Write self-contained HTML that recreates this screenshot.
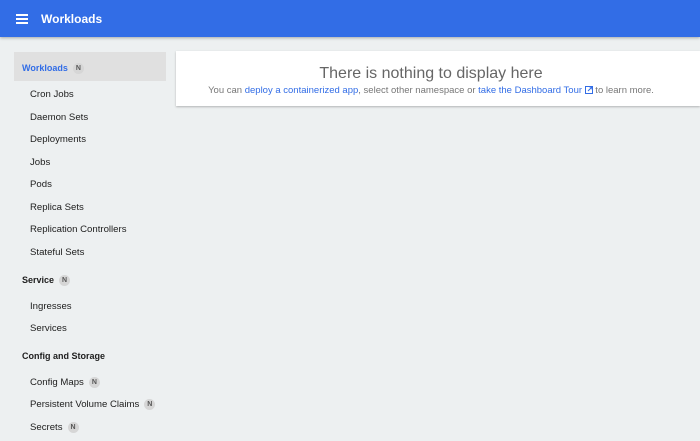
<!DOCTYPE html>
<html><head><style>
body{margin:0;width:700px;height:441px;overflow:hidden;background:#edf0f1;font-family:"Liberation Sans",sans-serif;position:relative}
.hdr{position:absolute;left:0;top:0;width:700px;height:37px;background:#326de6;box-shadow:0 1px 3px rgba(0,0,0,.3)}
.hdr .t{position:absolute;left:41px;top:12px;color:#fff;font-size:12px;font-weight:bold}
.bar{position:absolute;left:16px;width:12px;height:2px;background:#fff}
.sel{position:absolute;left:14px;top:52px;width:152px;height:29px;background:#e0e0e0}
.it{position:absolute;font-size:9.6px;color:#202020;line-height:12px;white-space:nowrap}
.h{font-weight:bold;left:22px;font-size:9px}
.s{left:30px}
.n{display:inline-block;width:11px;height:11px;border-radius:50%;background:#d6d6d6;color:#555;font-size:7px;text-align:center;line-height:11px;font-weight:bold;margin-left:5px;vertical-align:middle}
.card{position:absolute;left:176px;top:51px;width:524px;height:55px;background:#fff;box-shadow:0 1px 2px rgba(0,0,0,.25)}
.ti{position:absolute;left:-7px;width:524px;text-align:center;top:14px;font-size:16px;color:#666}
.su{position:absolute;left:-7px;width:524px;text-align:center;top:34px;font-size:9.5px;color:#777}
a{color:#326de6;text-decoration:none}
</style></head><body>
<div class="hdr"><div class="bar" style="top:14px"></div><div class="bar" style="top:18px"></div><div class="bar" style="top:22px"></div><div class="t">Workloads</div></div>
<div class="sel"></div>
<div class="it h" style="top:62px;color:#326de6">Workloads<span class="n">N</span></div>
<div class="it s" style="top:89px">Cron Jobs</div>
<div class="it s" style="top:112px">Daemon Sets</div>
<div class="it s" style="top:134px">Deployments</div>
<div class="it s" style="top:157px">Jobs</div>
<div class="it s" style="top:179px">Pods</div>
<div class="it s" style="top:202px">Replica Sets</div>
<div class="it s" style="top:224px">Replication Controllers</div>
<div class="it s" style="top:247px">Stateful Sets</div>
<div class="it h" style="top:274px">Service<span class="n">N</span></div>
<div class="it s" style="top:301px">Ingresses</div>
<div class="it s" style="top:323px">Services</div>
<div class="it h" style="top:350px">Config and Storage</div>
<div class="it s" style="top:377px">Config Maps<span class="n">N</span></div>
<div class="it s" style="top:399px">Persistent Volume Claims<span class="n">N</span></div>
<div class="it s" style="top:422px">Secrets<span class="n">N</span></div>
<div class="card"><div class="ti">There is nothing to display here</div>
<div class="su">You can <a>deploy a containerized app</a>, select other namespace or <a>take the Dashboard Tour <svg width="8" height="8" viewBox="0 0 8 8" style="vertical-align:-1px"><rect x=".5" y=".5" width="7" height="7" fill="none" stroke="#326de6"/><path d="M3 5L7 1M4.5 1H7V3.5" stroke="#326de6" fill="none"/></svg></a> to learn more.</div></div>
</body></html>
